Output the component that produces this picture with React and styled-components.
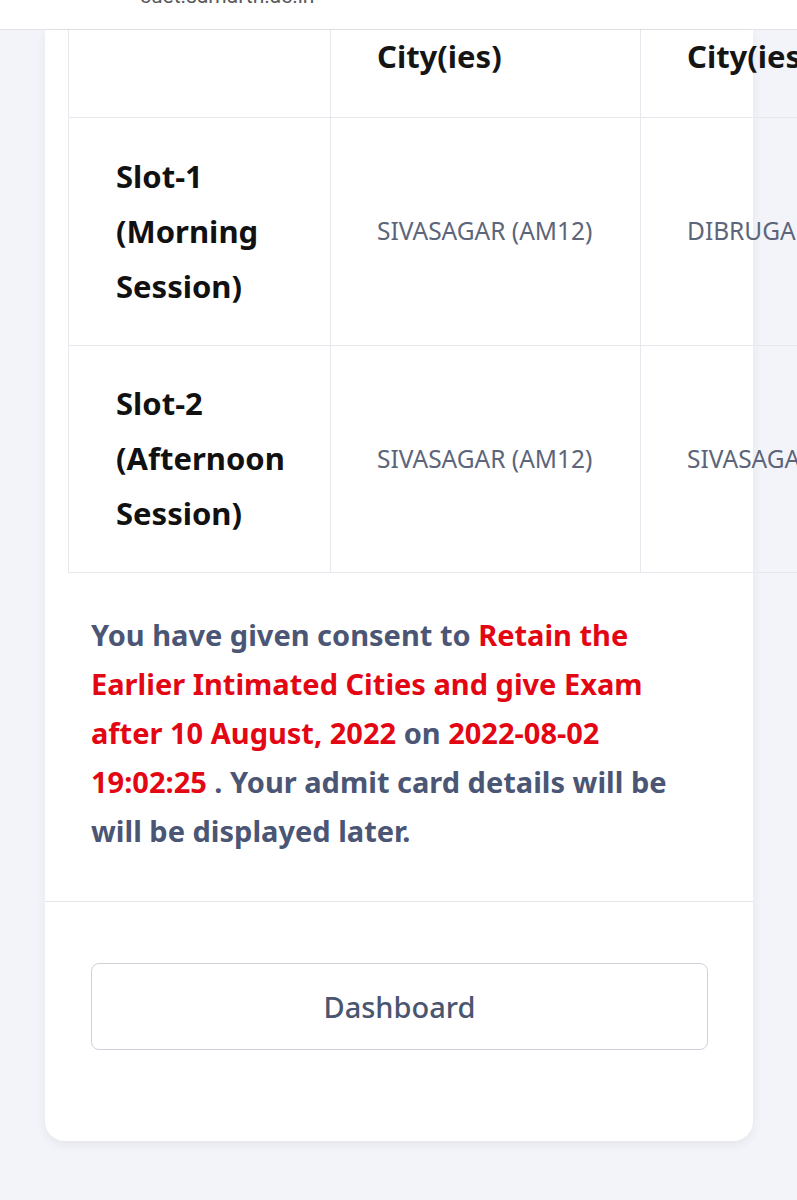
import React from 'react';
import styled, { createGlobalStyle } from 'styled-components';

const GlobalStyle = createGlobalStyle`
  html, body {
    margin: 0;
    padding: 0;
    background: #f3f4f9;
    font-family: "Noto Sans", "Open Sans", "Liberation Sans", Arial, sans-serif;
  }
`;

const Page = styled.div`
  min-height: 1200px;
  overflow-x: hidden;
  background: #f3f4f9;
`;

const TopBar = styled.header`
  height: 29px;
  background: #fff;
  border-bottom: 1px solid #e3e3e6;
  padding-left: 140px;
  overflow: hidden;
`;

const Url = styled.span`
  display: block;
  margin-top: -14px;
  font-family: Roboto, sans-serif;
  font-size: 21px;
  line-height: 20px;
  color: #5a5a5a;
`;

const Content = styled.main`
  padding: 0 44px 0 45px;
`;

const Card = styled.section`
  background: #fff;
  border-radius: 0 0 20px 20px;
  box-shadow: 0 4px 10px rgba(40, 50, 90, 0.07);
`;

const TableWrap = styled.div`
  padding-left: 23px;
`;

const Table = styled.table`
  border-collapse: collapse;
  table-layout: fixed;
  width: 882px;
`;

const HeadCell = styled.th`
  box-sizing: border-box;
  width: ${(p) => p.$w}px;
  height: 87px;
  padding: 6px 46px 0;
  vertical-align: top;
  text-align: left;
  font-size: 31px;
  line-height: 40px;
  font-weight: 700;
  color: #151515;
  border-left: 1px solid #e7e8ee;
  border-right: 1px solid #e7e8ee;
  border-bottom: 1px solid #e7e8ee;
  white-space: nowrap;
  overflow: hidden;
`;

const SlotCell = styled.td`
  box-sizing: border-box;
  height: ${(p) => p.$h}px;
  padding: 0 20px 0 47px;
  vertical-align: middle;
  font-size: 31px;
  line-height: 55px;
  font-weight: 700;
  color: #111;
  border: 1px solid #e7e8ee;
`;

const CityCell = styled.td`
  box-sizing: border-box;
  padding: 0 46px;
  vertical-align: middle;
  font-size: 24.5px;
  line-height: 30px;
  color: #5c6579;
  border: 1px solid #e7e8ee;
  white-space: nowrap;
  overflow: hidden;
`;

const Message = styled.p`
  margin: 0;
  padding: 37px 0 46px 46px;
  width: 600px;
  font-size: 29px;
  line-height: 49px;
  font-weight: 700;
  color: #4b5675;
`;

const Red = styled.span`
  color: #e30613;
`;

const Footer = styled.div`
  border-top: 1px solid #e4e5ea;
  padding: 61px 45px 91px 46px;
`;

const Button = styled.button`
  display: block;
  box-sizing: border-box;
  width: 100%;
  height: 87px;
  background: #fff;
  border: 1px solid #cfd2d9;
  border-radius: 8px;
  font-family: inherit;
  font-size: 29px;
  font-weight: 500;
  color: #4a5570;
  cursor: pointer;
`;

const slots = [
  { name: ['Slot-1', '(Morning', 'Session)'], cities: ['SIVASAGAR (AM12)', 'DIBRUGARH'], h: 228 },
  { name: ['Slot-2', '(Afternoon', 'Session)'], cities: ['SIVASAGAR (AM12)', 'SIVASAGAR (AM12)'], h: 227 },
];

export default function App() {
  return (
    <Page>
      <GlobalStyle />
      <TopBar>
        <Url>cuet.samarth.ac.in</Url>
      </TopBar>
      <Content>
        <Card>
          <TableWrap>
            <Table>
              <thead>
                <tr>
                  <HeadCell $w={262}></HeadCell>
                  <HeadCell $w={310}>City(ies)</HeadCell>
                  <HeadCell $w={310}>City(ies)</HeadCell>
                </tr>
              </thead>
              <tbody>
                {slots.map((s) => (
                  <tr key={s.name[0]}>
                    <SlotCell $h={s.h}>
                      {s.name.map((l, i) => (
                        <React.Fragment key={l}>
                          {i > 0 && <br />}
                          {l}
                        </React.Fragment>
                      ))}
                    </SlotCell>
                    {s.cities.map((c, i) => (
                      <CityCell key={i}>{c}</CityCell>
                    ))}
                  </tr>
                ))}
              </tbody>
            </Table>
          </TableWrap>
          <Message>
            You have given consent to <Red>Retain the Earlier Intimated Cities and give Exam after 10 August, 2022</Red> on{' '}
            <Red>2022-08-02 19:02:25</Red> . Your admit card details will be will be displayed later.
          </Message>
          <Footer>
            <Button>Dashboard</Button>
          </Footer>
        </Card>
      </Content>
    </Page>
  );
}
